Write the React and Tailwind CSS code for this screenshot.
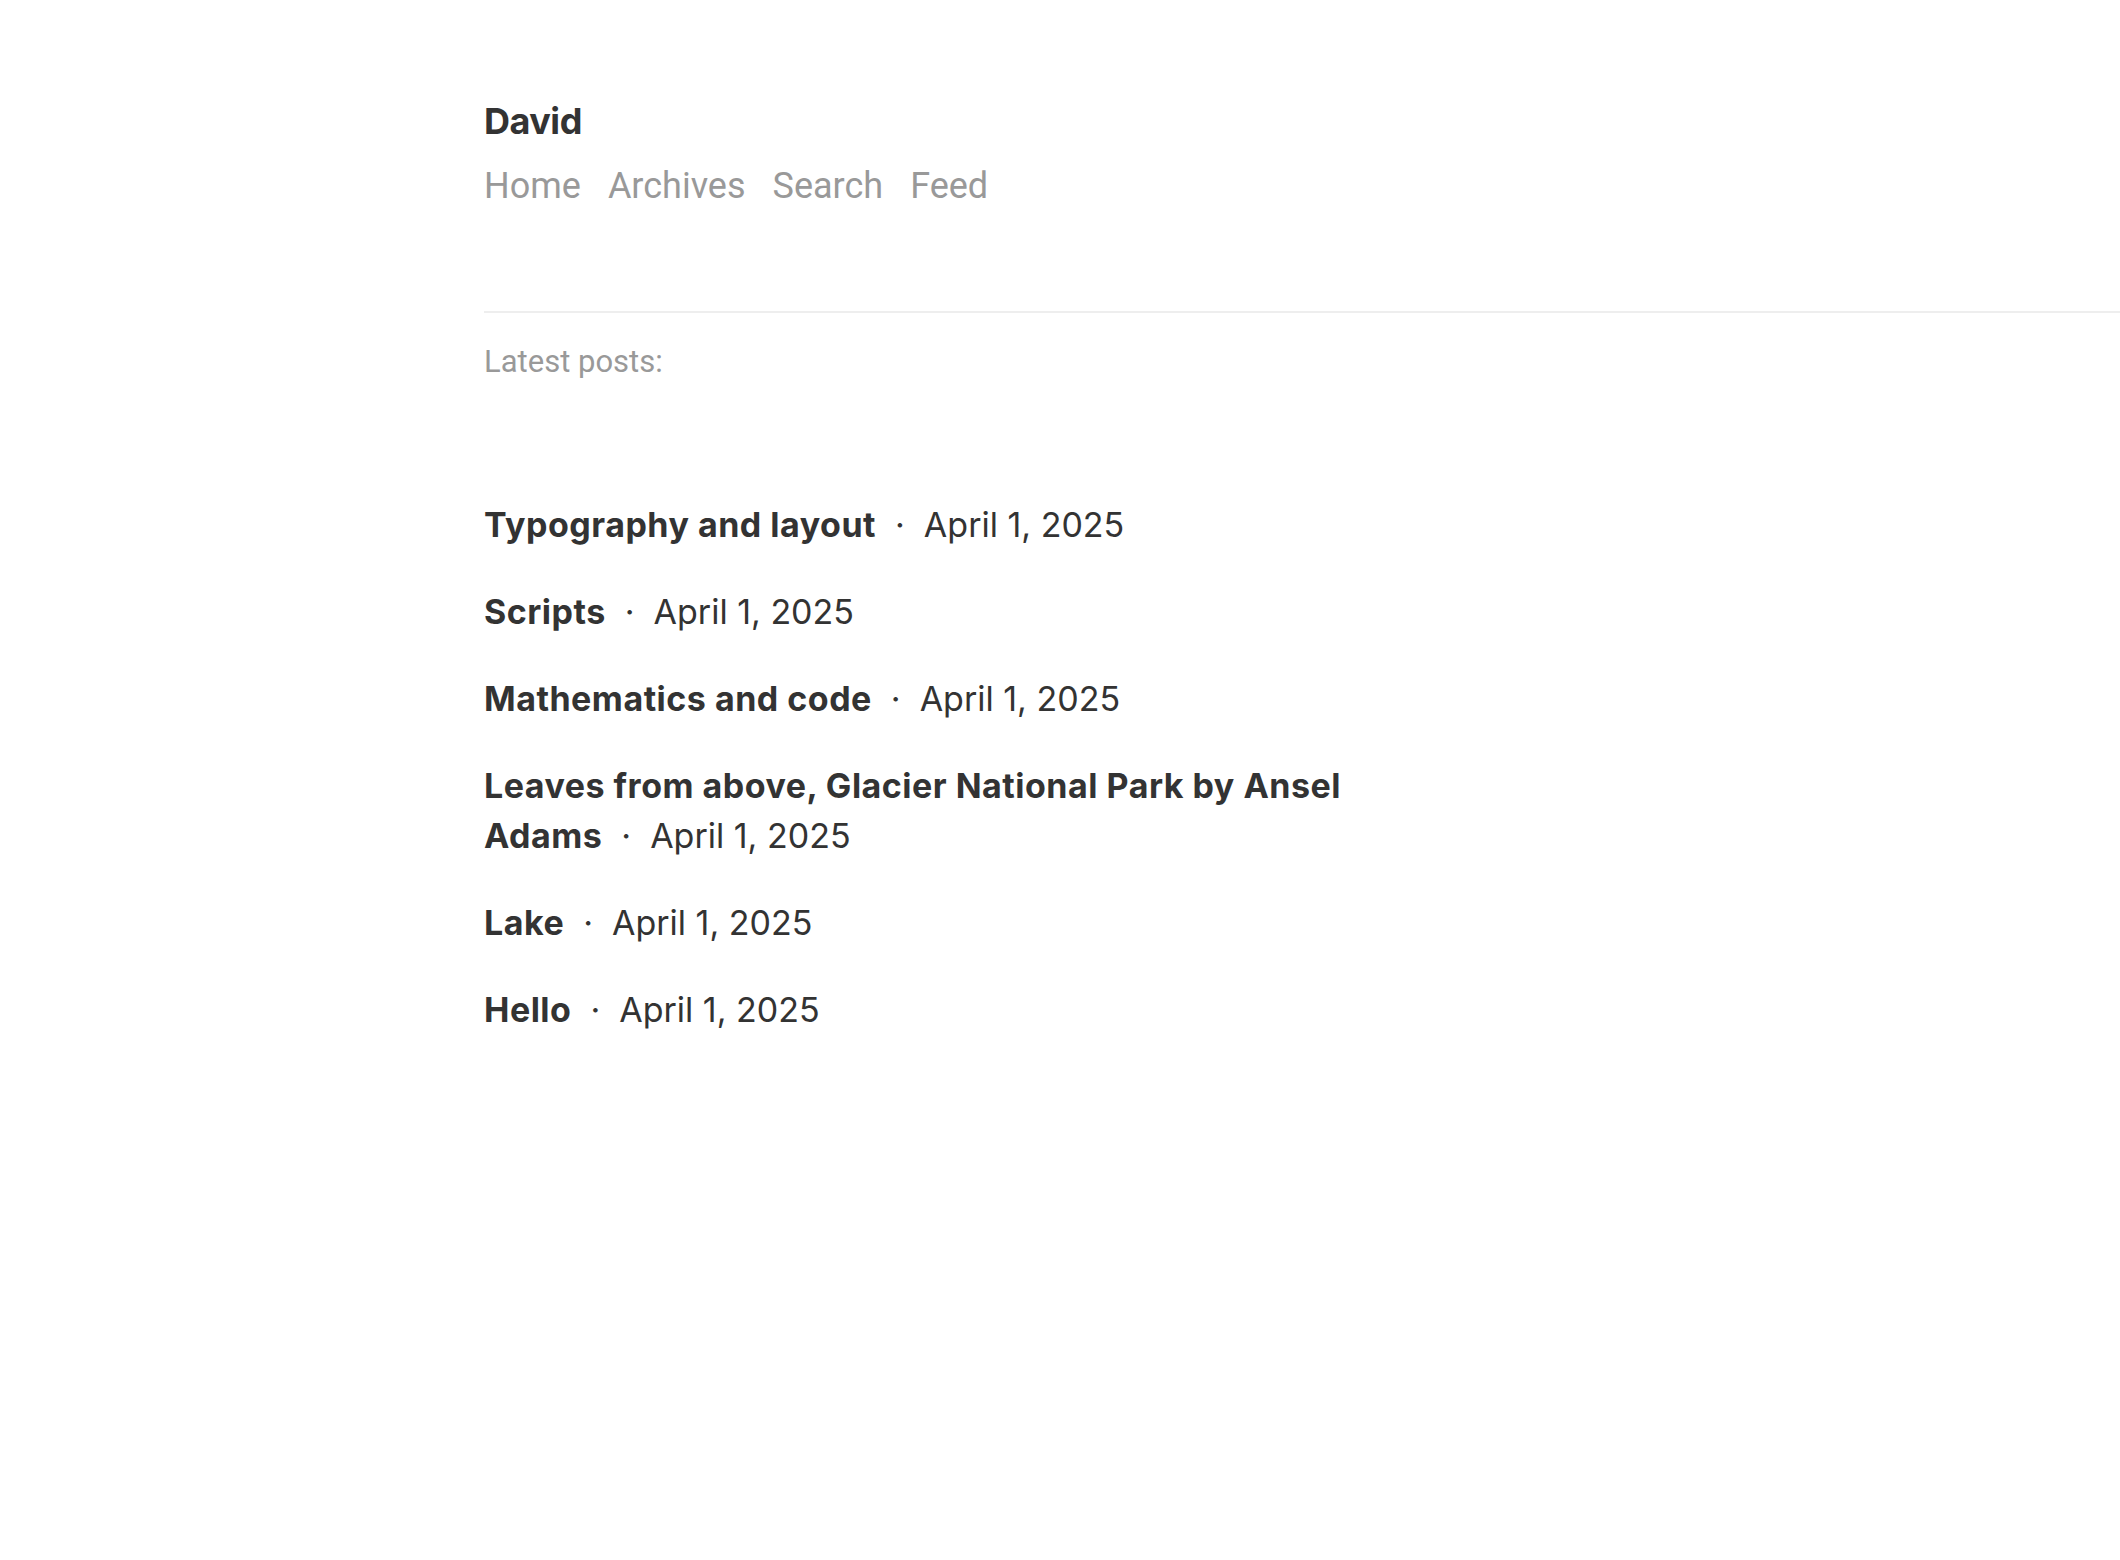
import React from 'react'

const NAV = ['Home', 'Archives', 'Search', 'Feed']

const POSTS = [
  { title: 'Typography and layout', date: 'April 1, 2025' },
  { title: 'Scripts', date: 'April 1, 2025' },
  { title: 'Mathematics and code', date: 'April 1, 2025' },
  { title: 'Leaves from above, Glacier National Park by Ansel Adams', date: 'April 1, 2025' },
  { title: 'Lake', date: 'April 1, 2025' },
  { title: 'Hello', date: 'April 1, 2025' },
]

export default function App() {
  return (
    <div className="min-h-[1560px] bg-white text-[#333] font-['Inter','Liberation_Sans',sans-serif]">
      <header className="pl-[484px] pt-[94px]">
        <h1 className="text-[36px] leading-[54px] font-bold tracking-[-0.5px]">David</h1>
        <nav className="flex gap-[27px] mt-[12px] text-[36px] leading-[52px] text-[#999] font-['Roboto','Liberation_Sans',sans-serif]">
          {NAV.map(n => <a key={n} href="#">{n}</a>)}
        </nav>
      </header>

      <div className="ml-[484px] mt-[99px] border-t-2 border-[#eee]" />

      <main className="pl-[484px]">
        <p className="mt-[27px] text-[31px] leading-[44px] text-[#999] font-['Roboto','Liberation_Sans',sans-serif]">Latest posts:</p>
        <ul className="mt-[116px] w-[900px] flex flex-col gap-[37px]">
          {POSTS.map(p => (
            <li key={p.title} className="text-[34px] leading-[50px]">
              <a href="#" className="font-bold tracking-[0.5px]">{p.title}</a>
              <span className="mx-[19px]">·</span>
              <span>{p.date}</span>
            </li>
          ))}
        </ul>
      </main>
    </div>
  )
}
